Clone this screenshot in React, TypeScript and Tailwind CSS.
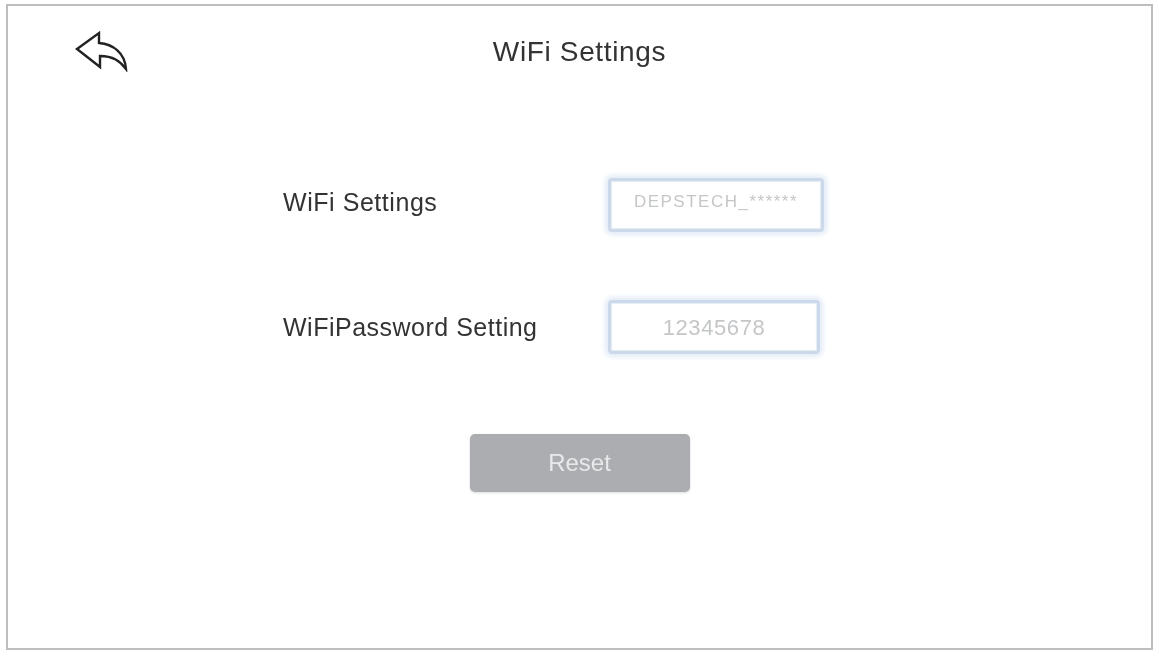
const BackIcon = () => (
  <svg width="56" height="42" viewBox="0 0 56 42" fill="none" className="blur-[0.5px]">
    <path
      d="M2 19 L24 3 V13 C38 14 50 23 51 39 C45 31 38 26 25 26 V37 Z"
      stroke="#222222"
      strokeWidth="2.4"
      strokeLinejoin="miter"
    />
  </svg>
);

const Field = ({ value, textClass, className }: { value: string; textClass: string; className: string }) => (
  <div
    className={`flex h-[54px] items-center justify-center rounded-[4px] border-[3px] border-[#cbd9ea] bg-white shadow-[0_0_5px_3px_#e3ecf6,inset_0_0_1px_1px_#e3ecf6] ${className}`}
  >
    <span className={`text-[#c4c6c8] blur-[0.5px] ${textClass}`}>{value}</span>
  </div>
);

export default function App() {
  return (
    <div className="h-[657px] w-[1159px] overflow-hidden bg-white pt-1 pl-1.5 font-['Liberation_Sans',Arial,sans-serif]">
      <div className="flex h-[646px] w-[1147px] flex-col border-2 border-[#bdbdbd]">
        <header className="relative mt-[24px] flex h-[44px] items-center justify-center">
          <div className="absolute top-0 left-[67px]">
            <BackIcon />
          </div>
          <h1 className="text-[28px] tracking-[0.65px] text-[#333333] blur-[0.5px]">WiFi Settings</h1>
        </header>

        <main className="mt-[104px] flex flex-col pl-[600px]">
          <div className="flex items-center">
            <label className="-ml-[325px] mb-[4px] w-[325px] text-[25px] tracking-[0.55px] text-[#333333] blur-[0.5px]">
              WiFi Settings
            </label>
            <Field value="DEPSTECH_******" textClass="mb-[7px]" className="w-[216px] text-[17px] tracking-[1.5px]" />
          </div>
          <div className="mt-[68px] flex items-center">
            <label className="-ml-[325px] mt-[2px] w-[325px] text-[25px] tracking-[0.5px] text-[#333333] blur-[0.5px]">
              WiFiPassword Setting
            </label>
            <Field value="12345678" textClass="" className="w-[212px] text-[22px] tracking-[0.6px]" />
          </div>
        </main>

        <div className="mt-[80px] flex justify-center">
          <button className="flex h-[58px] w-[220px] items-center justify-center rounded-[5px] bg-[#acadb0] text-[24px] text-[#e8e9ea] shadow-[0_1px_3px_#dddddd]">
            <span className="blur-[0.5px]">Reset</span>
          </button>
        </div>
      </div>
    </div>
  );
}
